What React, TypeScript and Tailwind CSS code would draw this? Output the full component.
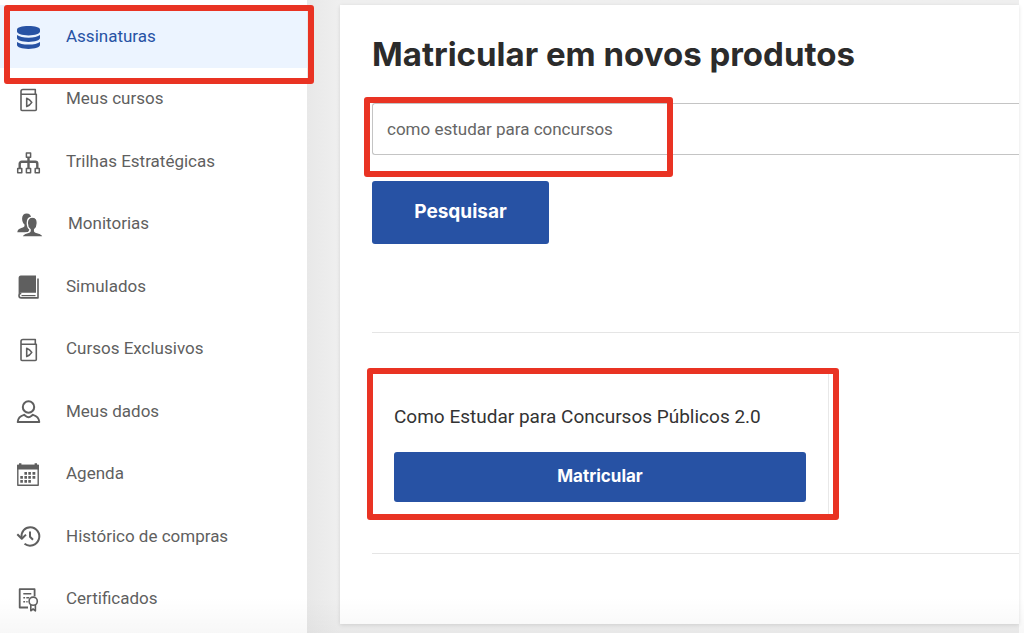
// App.tsx
import React from 'react';
import clsx from 'clsx';

interface IconProps {
  children: React.ReactNode;
  wide?: boolean;
}

const Icon: React.FC<IconProps> = ({ children, wide = false }) => (
  <svg
    aria-hidden="true"
    viewBox={wide ? '0 0 28 26' : '0 0 26 26'}
    className={clsx('h-[26px] shrink-0', wide ? 'w-7' : 'w-[26px]')}
    fill="none"
    stroke="currentColor"
    strokeWidth="1.6"
    strokeLinejoin="round"
  >
    {children}
  </svg>
);

const DatabaseIcon = () => (
  <Icon>
    <g fill="currentColor" stroke="none">
      <path d="M1 6.5C1 4.3 6 3 12.5 3S24 4.3 24 6.5v2c0 2.3-5 3.9-11.5 3.9S1 10.8 1 8.5z" />
      <path d="M1 12.1c2 1.700 6.500 2.600 11.500 2.600s9.500-.9 11.500-2.600v3c0 2.300-5 3.900-11.500 3.900S1 17.400 1 15.100z" />
      <path d="M1 18.900c2 1.700 6.500 2.600 11.500 2.600s9.500-.9 11.500-2.600v3.200C24 24.400 19 26 12.500 26S1 24.400 1 22.100z" />
    </g>
  </Icon>
);

const CourseIcon = () => (
  <Icon>
    <path d="M5 8.300V5.500a2 2 0 0 1 2-2h12.300v4.800M5 8.300h15.300v15.200a1 1 0 0 1-1 1H6a1 1 0 0 1-1-1z" />
    <path d="M10.700 12.200v8.400c1.800-.6 3.800-2.200 5.100-4.200-1.300-2-3.300-3.600-5.100-4.200z" />
  </Icon>
);

const TreeIcon = () => (
  <Icon>
    <path strokeWidth="2.400" d="M12.500 9v11M3.700 20v-4.200a2 2 0 0 1 2-2h13.600a2 2 0 0 1 2 2V20" />
    <path strokeWidth="1.500" d="M10.400 5h4.200v4.200h-4.200zM1.700 20.400h4.100v4.300H1.700zM10.400 20.400h4.200v4.300h-4.200zM19.200 20.400h4.100v4.300h-4.100z" fill="white" />
  </Icon>
);

const PeopleIcon = () => (
  <Icon wide>
    <g fill="currentColor" stroke="none">
      <path d="M10.700 2.500c2.800 0 4.600 1.900 4.600 5 0 2.800-1.200 5.500-2.900 6.600v2c0 1 .6 1.500 1.500 1.900L12 21.200H1.300c.2-2.300 1.500-3.400 4-4.200 2.300-.7 3.200-1.200 3.200-2.300v-1.100C7 12.400 6.100 10.100 6.100 7.500c0-3.100 1.800-5 4.600-5z" />
      <path stroke="white" strokeWidth="1.300" d="M16.300 6.200c3 0 5 2.200 5 5.700 0 3-1.200 5.400-2.700 6.700v1.300c0 .9 1.200 1.400 3.400 2 3 .8 4.500 1.500 5.200 4H5.900c.7-2.500 2.200-3.200 5-4 2.200-.6 3.200-1.100 3.200-2v-1.300c-1.600-1.300-2.800-3.700-2.800-6.700 0-3.500 2-5.700 5-5.700z" />
    </g>
  </Icon>
);

const BookIcon = () => (
  <Icon>
    <path fill="currentColor" stroke="none" d="M4.800 2.600H20v17.200H5.200c-1.200 0-2.100.4-2.600 1.200V5c0-1.500.8-2.400 2.200-2.400z" />
    <path d="M22 5.500v19.400H5.300c-1.500 0-2.300-1-2.300-2.400s.9-2.100 2.300-2.100" />
    <path strokeWidth="1.200" d="M5.500 22.600h14" />
  </Icon>
);

const UserIcon = () => (
  <Icon>
    <circle cx="12.500" cy="9" r="5.700" strokeWidth="2" />
    <path strokeWidth="1.900" d="M8 16.800c-3.800 1-6 3.500-6.300 7.200h21.600c-.3-3.700-2.500-6.200-6.300-7.200-1 .2-2.400 2.400-4.500 2.400S9 17 8 16.800z" />
  </Icon>
);

const CalendarIcon = () => (
  <Icon>
    <path strokeWidth="1.400" d="M1.800 4.500h20.400v19.800H1.800z" />
    <path fill="currentColor" stroke="none" d="M1.100 3.800h1.900V2.300h2.400v1.500h13.200V2.300H21v1.500h1.900v4.700H1.100z" />
    <path strokeWidth="2.800" d="M8.400 12.300H11M12.300 12.300h2.600M16.500 12.300h2.800M4.300 16.300h2.600M8.400 16.300H11M12.300 16.300h2.600M16.500 16.300h2.800M4.300 20.400h2.600M8.400 20.400H11M12.300 20.400h2.600" />
  </Icon>
);

const HistoryIcon = () => (
  <Icon>
    <path strokeWidth="2" d="M5.500 14.500C5 8.500 9 4.200 14.200 4.200a9.200 9.200 0 1 1-5.700 16.500" />
    <path strokeWidth="2" d="M1.300 11.300l4.500 4.500 4.200-4.200" />
    <path strokeWidth="2" d="M14 8.500v5.300l3 3" />
  </Icon>
);

const CertificateIcon = () => (
  <Icon>
    <path strokeWidth="1.800" d="M12 21.500H3.700V3.200h14.900v7" />
    <path d="M7.300 7.800h8M7.300 11.800h1.800M10.300 11.800h3M7.300 15.700h1.800M10.300 15.700h1.300" />
    <path d="M14.800 18.800v6l2.300-1.800 2.300 1.800v-6" />
    <circle cx="17.200" cy="15.200" r="4.100" fill="white" />
  </Icon>
);

const menuItems = [
  { label: 'Assinaturas', icon: DatabaseIcon, active: true },
  { label: 'Meus cursos', icon: CourseIcon },
  { label: 'Trilhas Estratégicas', icon: TreeIcon },
  { label: 'Monitorias', icon: PeopleIcon },
  { label: 'Simulados', icon: BookIcon },
  { label: 'Cursos Exclusivos', icon: CourseIcon },
  { label: 'Meus dados', icon: UserIcon },
  { label: 'Agenda', icon: CalendarIcon },
  { label: 'Histórico de compras', icon: HistoryIcon },
  { label: 'Certificados', icon: CertificateIcon },
];

// Red frame drawn over the part of the page that needs attention
const Highlight: React.FC<{ className: string }> = ({ className }) => (
  <div className={clsx('pointer-events-none absolute z-10 rounded-[3px] border-6 border-[#e93323]', className)} />
);

const Sidebar = () => (
  <nav className="flex w-[307px] shrink-0 flex-col bg-white pt-[5px] pb-[3px]">
    <ul className="flex flex-1 flex-col">
      {menuItems.map(({ label, icon: ItemIcon, active }) => (
        <li key={label} className="relative flex flex-1">
          <a
            href="#"
            className={clsx(
              'flex flex-1 items-center gap-6 pl-4 text-[17px]',
              active ? 'bg-[#ecf4ff] text-[#2752a4]' : 'text-[#5f5f5f]'
            )}
          >
            <ItemIcon />
            <span>{label}</span>
          </a>
          {active && <Highlight className="-right-[7px] -bottom-4 left-1 top-0" />}
        </li>
      ))}
    </ul>
  </nav>
);

const SearchForm = () => (
  <form onSubmit={(e) => e.preventDefault()}>
    <div className="relative">
      <input
        type="text"
        aria-label="Buscar produtos"
        defaultValue="como estudar para concursos"
        className="block h-[52px] w-full rounded-l-[3px] border border-r-0 border-[#c4c4c4] bg-white px-3.5 text-[17px] text-[#666] outline-none"
      />
      <Highlight className="-top-1.5 -left-2 h-20 w-[309px]" />
    </div>
    <button
      type="submit"
      className="mt-[26px] h-[63px] w-[177px] rounded-[3px] bg-[#2752a4] font-[Inter] text-[19px] font-bold text-white"
    >
      Pesquisar
    </button>
  </form>
);

const ProductCard = () => (
  <article className="relative mt-10 mb-[39px] w-[457px] border-r border-[#e8e8e8] px-[22px] pt-7 pb-3">
    <h2 className="text-[19px] leading-8 text-[#333]">Como Estudar para Concursos Públicos 2.0</h2>
    <button
      type="button"
      className="mt-[19px] h-[50px] w-full rounded-[3px] bg-[#2752a4] font-[Inter] text-[17px] font-bold text-white"
    >
      Matricular
    </button>
    <Highlight className="-top-[5px] -right-[11px] -bottom-1.5 -left-[5px]" />
  </article>
);

const App: React.FC = () => {
  return (
    <div className="relative flex min-h-screen bg-white pr-[5px] font-[Roboto,sans-serif]">
      <Sidebar />
      <main className="flex min-w-0 flex-1 bg-linear-to-r from-[#e8e8e8] to-[#efefef] to-[32px] pt-[5px] pb-[9px] pl-[33px]">
        <section className="min-w-0 flex-1 bg-white pt-[25px] pl-8 shadow-[0_1px_4px_rgba(0,0,0,0.12)]">
          <h1 className="mb-[25px] font-[Inter] text-[33px] leading-12 font-bold text-[#2b2b2b]">
            Matricular em novos produtos
          </h1>
          <SearchForm />
          <hr className="mt-[88px] border-[#e5e5e5]" />
          <ProductCard />
          <hr className="border-[#e5e5e5]" />
        </section>
      </main>
      <div className="pointer-events-none absolute inset-x-0 bottom-0 h-9 bg-linear-to-b from-transparent to-black/3" />
    </div>
  );
};

export default App;
